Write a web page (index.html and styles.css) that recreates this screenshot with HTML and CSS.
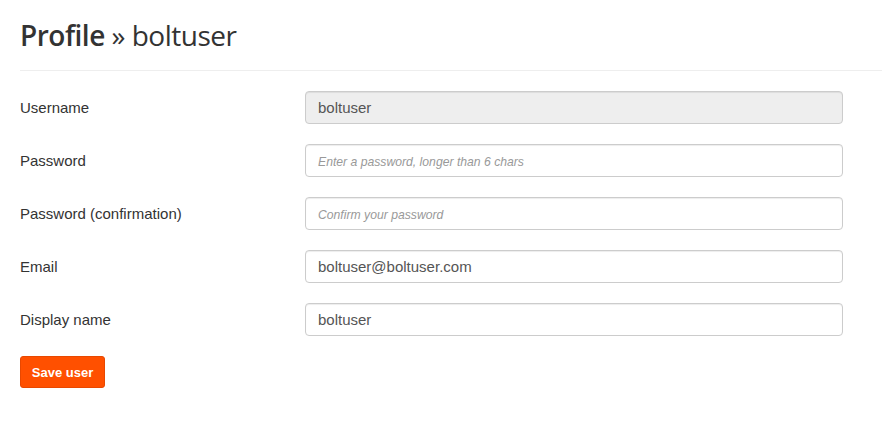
FILE: index.html
```html
<!DOCTYPE html>
<html>
<head>
<meta charset="utf-8">
<link rel="stylesheet" href="styles.css">
</head>
<body>
<div class="page">
  <h1 class="title"><strong>Profile</strong> » boltuser</h1>
  <form class="form">
    <div class="row">
      <label class="label">Username</label>
      <input class="input" type="text" value="boltuser" disabled>
    </div>
    <div class="row">
      <label class="label">Password</label>
      <input class="input" type="password" placeholder="Enter a password, longer than 6 chars">
    </div>
    <div class="row">
      <label class="label">Password (confirmation)</label>
      <input class="input" type="password" placeholder="Confirm your password">
    </div>
    <div class="row">
      <label class="label">Email</label>
      <input class="input" type="text" value="boltuser@boltuser.com">
    </div>
    <div class="row">
      <label class="label">Display name</label>
      <input class="input" type="text" value="boltuser">
    </div>
    <button class="btn" type="button">Save user</button>
  </form>
</div>
</body>
</html>
```

FILE: styles.css
```css
html, body {
  margin: 0;
  padding: 0;
  background: #fff;
}
.page {
  padding-left: 20px;
  font-family: "Liberation Sans", Arial, sans-serif;
  color: #333;
}
.title {
  margin: 0;
  height: 71px;
  box-sizing: border-box;
  padding-top: 15px;
  font-family: "Open Sans", sans-serif;
  font-weight: 400;
  font-size: 28px;
  line-height: 40px;
  color: #333;
  border-bottom: 1px solid #eee;
  letter-spacing: -0.5px;
}
.title strong {
  font-weight: 600;
}
.form {
  width: 823px;
  padding-top: 20px;
  display: flex;
  flex-direction: column;
  gap: 20px;
}
.row {
  display: flex;
  align-items: center;
}
.label {
  width: 285px;
  flex: none;
  font-size: 15px;
  color: #333;
}
.input {
  flex: 1;
  height: 33px;
  box-sizing: border-box;
  border: 1px solid #ccc;
  border-radius: 4px;
  padding: 0 12px;
  font-family: "Liberation Sans", Arial, sans-serif;
  font-size: 15px;
  color: #555;
  background: #fff;
  box-shadow: inset 0 1px 1px rgba(0,0,0,0.075);
  margin: 0;
}
.input:disabled {
  background: #eee;
  color: #555;
}
.input::placeholder {
  font-style: italic;
  font-size: 12.2px;
  color: #999;
}
.btn {
  align-self: flex-start;
  width: 85px;
  height: 32px;
  border: 1px solid #e84800;
  border-radius: 3px;
  background: #ff5000;
  color: #fff;
  font-family: "Liberation Sans", Arial, sans-serif;
  font-weight: 700;
  font-size: 13px;
  padding: 0;
}
```
